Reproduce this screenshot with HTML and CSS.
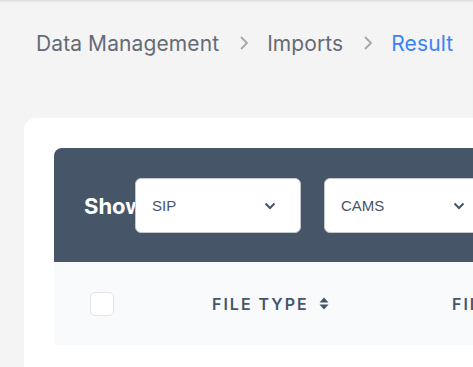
FILE: index.html
```html
<!DOCTYPE html>
<html lang="en">
<head>
    <meta charset="UTF-8">
    <meta name="viewport" content="width=device-width, initial-scale=1.0">
    <title>Import Result</title>
    <link rel="stylesheet" href="styles.css">
</head>
<body>
    <nav class="breadcrumb">
        <a href="#">Data Management</a>
        <svg class="crumb-sep" width="10" height="16" viewBox="0 0 10 16"><path d="M2 2l6 6-6 6" fill="none" stroke="currentColor" stroke-width="1.8"/></svg>
        <a href="#">Imports</a>
        <svg class="crumb-sep" width="10" height="16" viewBox="0 0 10 16"><path d="M2 2l6 6-6 6" fill="none" stroke="currentColor" stroke-width="1.8"/></svg>
        <span class="current">Result</span>
    </nav>

    <div class="card">
        <div class="table-wrap">
            <div class="toolbar">
                <span class="show-label">Show</span>
                <div class="select-box">
                    <span>SIP</span>
                    <svg width="12" height="8" viewBox="0 0 12 8"><path d="M1.5 1.5l4.5 4.5 4.5-4.5" fill="none" stroke="currentColor" stroke-width="2"/></svg>
                </div>
                <div class="select-box">
                    <span>CAMS</span>
                    <svg width="12" height="8" viewBox="0 0 12 8"><path d="M1.5 1.5l4.5 4.5 4.5-4.5" fill="none" stroke="currentColor" stroke-width="2"/></svg>
                </div>
            </div>
            <div class="table-head">
                <div class="col-check"><span class="checkbox"></span></div>
                <div class="col-type">
                    FILE TYPE
                    <svg width="10" height="13" viewBox="0 0 10 13"><path d="M5 0.5l4.5 5H0.5z M5 12.5l4.5-5H0.5z" fill="currentColor"/></svg>
                </div>
                <div class="col-name">FILE NAME</div>
            </div>
        </div>
    </div>
</body>
</html>
```

FILE: styles.css
```css
body {
    margin: 0;
    padding: 0;
    background-color: #f4f4f4;
    font-family: Inter, "Noto Sans", sans-serif;
    box-shadow: inset 0 3px 3px -2px rgba(0, 0, 0, 0.12);
    height: 367px;
    overflow: hidden;
}
/* breadcrumb */
.breadcrumb {
    display: flex;
    align-items: center;
    padding: 30px 0 0 36px;
    height: 26px;
    font-size: 21px;
    letter-spacing: 0.1px;
    white-space: nowrap;
}
.breadcrumb a {
    color: #646b75;
    text-decoration: none;
}
.crumb-sep {
    color: #a3a7ae;
    margin: 0 18px 0 20px;
}
.breadcrumb .current {
    color: #3b82f6;
}
/* card */
.card {
    margin: 62px 0 0 24px;
    width: 600px;
    padding: 30px;
    background-color: #fff;
    border-radius: 12px;
}
.table-wrap {
    border-radius: 8px 8px 0 0;
    overflow: hidden;
}
.toolbar {
    display: flex;
    align-items: center;
    padding: 30px 30px 29px;
    background-color: #475569;
}
.show-label {
    width: 51px;
    color: #fff;
    font-size: 22px;
    font-weight: 700;
    white-space: nowrap;
}
.select-box {
    position: relative;
    z-index: 1;
    display: flex;
    align-items: center;
    justify-content: space-between;
    box-sizing: border-box;
    width: 166px;
    height: 55px;
    margin-right: 23px;
    padding: 0 24px 0 16px;
    background-color: #fff;
    border: 1px solid #c4c7cc;
    border-radius: 6px;
    color: #475569;
    font-family: "Liberation Sans", Arial, sans-serif;
    font-size: 15px;
}
.table-head {
    display: flex;
    align-items: center;
    height: 83px;
    background-color: #f8fafc;
    color: #475569;
    font-size: 16px;
    font-weight: 600;
    letter-spacing: 2px;
}
.col-check {
    width: 122px;
    padding-left: 36px;
}
.checkbox {
    display: block;
    width: 22px;
    height: 22px;
    background-color: #fff;
    border: 1px solid #e2e4e8;
    border-radius: 5px;
}
.col-type {
    display: flex;
    align-items: center;
    gap: 10px;
    width: 240px;
}
.col-name {
    white-space: nowrap;
}
```
